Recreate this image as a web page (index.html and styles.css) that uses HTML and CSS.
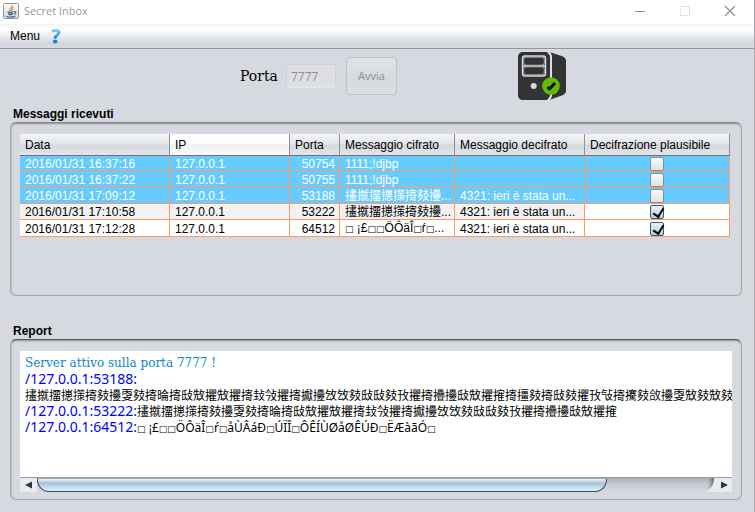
FILE: index.html
```
<!DOCTYPE html>
<html lang="it">
<head>
<meta charset="utf-8">
<title>Secret Inbox</title>
<link rel="stylesheet" href="styles.css">
</head>
<body>
<div class="window">
  <header class="titlebar">
    <svg class="app-icon" viewBox="0 0 16 16" width="16" height="16" aria-hidden="true">
      <defs><linearGradient id="tile" x1="0" y1="0" x2="0" y2="1"><stop offset="0" stop-color="#fdfdfd"/><stop offset="1" stop-color="#cfd9e2"/></linearGradient></defs>
      <rect x=".5" y=".5" width="15" height="15" rx="1" fill="url(#tile)" stroke="#8697a6"/>
      <path d="M9.300 2.200C9.800 4 6 5 7 6.800l1 1.200M10.500 4.500C8.500 5.500 8.300 6.300 9 7.800" fill="none" stroke="#e58a2e" stroke-width="1.200"/>
      <path d="M4.500 8.600c1.500.8 4.500.8 6 0M5 10.300c1.500.7 4 .7 5.300 0M5.500 11.800h4M3 13.200c2.500 1 7 1 9.500-.2M11 8.700c2.600-.6 2.300 2 .2 2.400" fill="none" stroke="#41698f" stroke-width="1.100"/>
    </svg>
    <span class="title">Secret Inbox</span>
    <div class="controls">
      <button type="button" aria-label="Riduci"><svg width="12" height="12" viewBox="0 0 12 12"><path d="M1 6.500h10" stroke="#8b8b8b"/></svg></button>
      <button type="button" aria-label="Ingrandisci"><svg width="12" height="12" viewBox="0 0 12 12"><rect x="1.500" y="1.500" width="9" height="9" fill="none" stroke="#e4e4e4"/></svg></button>
      <button type="button" aria-label="Chiudi"><svg width="12" height="12" viewBox="0 0 12 12"><path d="M1 1l10 10M11 1L1 11" stroke="#8b8b8b" stroke-width="1.100"/></svg></button>
    </div>
  </header>

  <nav class="menubar">
    <button type="button">Menu</button>
    <button type="button" aria-label="Aiuto">
      <svg width="12" height="16" viewBox="0 0 12 16"><defs><linearGradient id="help" x1="0" y1="0" x2="0" y2="1"><stop offset="0" stop-color="#8fd6fb"/><stop offset="1" stop-color="#0a7fe0"/></linearGradient></defs><path d="M1.500 2C4 .5 10.500.3 10.500 4.300c0 3.200-3.800 3-3.800 6.200H3.800C3.600 7 7 6.800 7 4.800 7 3.300 4.500 3.600 2.200 4.700z" fill="url(#help)"/><ellipse cx="5.200" cy="13.500" rx="2.300" ry="1.900" fill="#0a84e4"/></svg>
    </button>
  </nav>

  <main>
    <form class="connection">
      <label for="port">Porta</label>
      <input id="port" type="text" value="7777" disabled>
      <button type="button" disabled>Avvia</button>
      <svg class="server" width="48" height="48" viewBox="0 0 48 48" role="img" aria-label="Server attivo">
        <path d="M5 0h22c3 0 5 2 5 5v38c0 3-2 5-5 5H5c-3 0-5-2-5-5V5c0-3 2-5 5-5z" fill="#333"/>
        <path d="M32 .3l11 3.500c3 1 5 2.500 5 5v30c0 2.500-2 4-5 5L32 47.700c1.300-1.300 2-3 2-5V5.500c0-2-.7-4-2-5.200z" fill="#333"/>
        <path d="M30 .5c2 1 3 2.500 3 5v37c0 2.500-1 4-3 5" fill="none" stroke="#dfe2e8" stroke-width="1.200"/>
        <rect x="4.500" y="4" width="23" height="20" rx="2.500" fill="#333" stroke="#d6d9df" stroke-width="1.500"/>
        <path d="M5 14h22" stroke="#d6d9df" stroke-width="1.500"/>
        <rect x="5.700" y="5.200" width="20.600" height="8" rx="2.500" fill="#333" stroke="#d6d9df" stroke-width=".7"/>
        <rect x="5.700" y="14.800" width="20.600" height="8" rx="2.500" fill="#333" stroke="#d6d9df" stroke-width=".7"/>
        <circle cx="15.700" cy="34" r="3" fill="#d6d9df"/>
        <circle cx="33" cy="34" r="8.800" fill="#62bd00"/>
        <path d="M29.500 35l2 2 5.500-6" fill="none" stroke="#000" stroke-width="2.800"/>
      </svg>
    </form>

    <section class="group">
      <h2>Messaggi ricevuti</h2>
      <div class="panel messages">
        <table>
          <colgroup><col class="c-date"><col class="c-ip"><col class="c-port"><col class="c-enc"><col class="c-dec"><col></colgroup>
          <thead>
            <tr><th>Data</th><th class="sorted">IP</th><th>Porta</th><th>Messaggio cifrato</th><th>Messaggio decifrato</th><th>Decifrazione plausibile</th></tr>
          </thead>
          <tbody>
            <tr class="selected"><td>2016/01/31 16:37:16</td><td>127.0.0.1</td><td class="num">50754</td><td>1111;!djbp</td><td></td><td class="check"><input type="checkbox" aria-label="Plausibile"></td></tr>
            <tr class="selected"><td>2016/01/31 16:37:22</td><td>127.0.0.1</td><td class="num">50755</td><td>1111;!djbp</td><td></td><td class="check"><input type="checkbox" aria-label="Plausibile"></td></tr>
            <tr class="selected"><td>2016/01/31 17:09:12</td><td>127.0.0.1</td><td class="num">53188</td><td>&#x3A47;&#x3A46;&#x3A45;&#x3A44;&#x3A4D;&#x3A33;&#x3A7C;&#x3A78;...</td><td>4321: ieri è stata un...</td><td class="check"><input type="checkbox" aria-label="Plausibile"></td></tr>
            <tr class="striped"><td>2016/01/31 17:10:58</td><td>127.0.0.1</td><td class="num">53222</td><td>&#x3A47;&#x3A46;&#x3A45;&#x3A44;&#x3A4D;&#x3A33;&#x3A7C;&#x3A78;...</td><td>4321: ieri è stata un...</td><td class="check"><input type="checkbox" aria-label="Plausibile" checked></td></tr>
            <tr><td>2016/01/31 17:12:28</td><td>127.0.0.1</td><td class="num">64512</td><td><span class="box">□</span> ¡£<span class="box">□□</span>ÖÔäÎ<span class="box">□</span>ŕ<span class="box">□</span>...</td><td>4321: ieri è stata un...</td><td class="check"><input type="checkbox" aria-label="Plausibile" checked></td></tr>
          </tbody>
        </table>
      </div>
    </section>

    <section class="group">
      <h2>Report</h2>
      <div class="panel report">
        <div class="log">
          <p class="status">Server attivo sulla porta 7777 !</p>
          <p><span class="peer">/127.0.0.1:53188:</span></p>
          <p class="cjk">&#x3A47;&#x3A46;&#x3A45;&#x3A44;&#x3A4D;&#x3A33;&#x3A7C;&#x3A78;&#x3A85;&#x3A7C;&#x3A33;&#x3AFB;&#x3A33;&#x3A86;&#x3A87;&#x3A74;&#x3A87;&#x3A74;&#x3A33;&#x3A88;&#x3A81;&#x3A74;&#x3A33;&#x3A75;&#x3A78;&#x3A7F;&#x3A7F;&#x3A7C;&#x3A86;&#x3A86;&#x3A7C;&#x3A80;&#x3A74;&#x3A33;&#x3A79;&#x3A78;&#x3A86;&#x3A87;&#x3A74;&#x3A41;&#x3A33;&#x3A56;&#x3A7C;&#x3A33;&#x3A86;&#x3A7C;&#x3A74;&#x3A80;&#x3A82;&#x3A33;&#x3A77;&#x3A7C;&#x3A89;&#x3A78;&#x3A85;&#x3A87;&#x3A7C;&#x3A87;&#x3A7C;</p>
          <p><span class="peer">/127.0.0.1:53222:</span><span class="cjk">&#x3A47;&#x3A46;&#x3A45;&#x3A44;&#x3A4D;&#x3A33;&#x3A7C;&#x3A78;&#x3A85;&#x3A7C;&#x3A33;&#x3AFB;&#x3A33;&#x3A86;&#x3A87;&#x3A74;&#x3A87;&#x3A74;&#x3A33;&#x3A88;&#x3A81;&#x3A74;&#x3A33;&#x3A75;&#x3A78;&#x3A7F;&#x3A7F;&#x3A7C;&#x3A86;&#x3A86;&#x3A7C;&#x3A80;&#x3A74;&#x3A33;&#x3A79;&#x3A78;&#x3A86;&#x3A87;&#x3A74;&#x3A41;</span></p>
          <p><span class="peer">/127.0.0.1:64512:</span><span class="latin"><span class="box">□</span> ¡£<span class="box">□□</span>ÖÔäÎ<span class="box">□</span>ŕ<span class="box">□</span>åÙÂáÐ<span class="box">□</span>ÚÏÎ<span class="box">□</span>ÔÊÍÙØåØÊÚÐ<span class="box">□</span>ËÆàãÓ<span class="box">□</span></span></p>
        </div>
        <div class="scrollbar">
          <button type="button" aria-label="Scorri a sinistra"><svg width="8" height="8" viewBox="0 0 8 8"><path d="M0 4l7-3.500v7z" fill="#333"/></svg></button>
          <div class="track"><div class="thumb"></div><svg class="track-end" width="9" height="14" viewBox="0 0 9 14"><defs><linearGradient id="end" x1="0" y1="0" x2="1" y2="0"><stop offset="0" stop-color="#c2c5cb" stop-opacity="0"/><stop offset="1" stop-color="#55585e"/></linearGradient></defs><path d="M0 0h8c0 6-2 10-8 13z" fill="url(#end)"/><path d="M8 0c0 6-2 10-8 14h9V0z" fill="#e9ebee"/></svg></div>
          <button type="button" aria-label="Scorri a destra"><svg width="8" height="8" viewBox="0 0 8 8"><path d="M8 4L1 .5v7z" fill="#333"/></svg></button>
        </div>
      </div>
    </section>
  </main>
</div>
</body>
</html>
```
FILE: styles.css
```
* { box-sizing: border-box; }

body {
  margin: 0;
  background: #d6d9df;
  color: #000;
  font: 12px/16px "Liberation Sans", "Noto Sans CJK SC", sans-serif;
}

button { margin: 0; padding: 0; border: 0; background: none; font: inherit; color: inherit; }
svg { display: block; }

.window { min-height: 100vh; border-right: 1px solid #a5a7aa; }

.titlebar { display: flex; align-items: center; height: 24px; padding-left: 3px; background: #fff; }
.app-icon { margin-bottom: 2px; }
.title { margin: 0 0 2px 5px; color: #999; font: 11px/16px "Open Sans", sans-serif; }
.controls { display: flex; margin: 0 2px 2px auto; }
.controls button { display: grid; place-items: center; width: 45px; height: 22px; }

.menubar {
  display: flex;
  align-items: center;
  gap: 10px;
  height: 25px;
  padding-left: 10px;
  border-bottom: 1px solid #9297a1;
  background: linear-gradient(#f3f4f5, #fff 25%, #e9ecee 50%, #d3d7dc 80%, #d6d9df);
}

.connection {
  display: flex;
  align-items: center;
  justify-content: center;
  height: 58px;
  padding: 0 0 4px 52px;
}
.connection label { font: 14px/20px "DejaVu Serif", serif; }
.connection input {
  width: 50px;
  height: 24px;
  margin: 0 10px 0 8px;
  padding: 0 4px;
  border: 1px solid #cdd0d5;
  border-bottom-color: #e3e5e9;
  background: #dddfe3;
  color: #8e8f91;
  font: 12px/20px "Open Sans", sans-serif;
}
.connection button {
  width: 51px;
  height: 38px;
  border: 1px solid #bfc3c9;
  border-radius: 4px;
  background: linear-gradient(#dfe2e6, #d6d9de 60%, #dddfe4);
  color: #8e8f91;
  font: 11px/20px "Open Sans", sans-serif;
}
.server { margin-left: 121px; }

.group { padding: 0 12px 0 10px; }
.group h2 { margin: 0; padding-left: 3px; font-size: 12px; line-height: 15px; }
.panel {
  border: 1px solid #a4a7ac;
  border-top-color: #83868b;
  border-radius: 6px;
  box-shadow: inset 0 2px 2px -1px #8a8d92, inset 1px 0 1px #bfc2c8;
}

.messages { min-height: 174px; margin-bottom: 28px; padding: 11px 11px 0 9px; }
table { width: 100%; border-collapse: separate; border-spacing: 0; table-layout: fixed; }
.c-date { width: 150px; }
.c-ip { width: 120px; }
.c-port { width: 50px; }
.c-enc { width: 115px; }
.c-dec { width: 130px; }
th {
  height: 22px;
  padding: 0 5px;
  border-right: 1px solid #8e9196;
  border-bottom: 1px solid #6e7176;
  background: linear-gradient(#f4f5f7, #e4e6ea 45%, #d5d8dd 55%, #e3e5e9);
  font-weight: normal;
  text-align: left;
  white-space: nowrap;
}
th.sorted { background: linear-gradient(#fff, #fbfbfc 45%, #eff0f3 55%, #fafafb); }
td {
  height: 16px;
  padding: 2px 5px 0;
  border-right: 1px solid #ff9966;
  border-bottom: 1px solid #ff9966;
  background: #fff;
  line-height: 13px;
  white-space: nowrap;
  overflow: hidden;
}
.striped td { background: #f2f2f2; }
.striped .check { background: #fff; }
.selected td { background: #66ccff; color: #fff; }
.num { text-align: right; }
td.num { padding-right: 4px; }
td.check { padding-top: 1px; }
.check input {
  display: block;
  appearance: none;
  width: 14px;
  height: 14px;
  margin: 0 auto;
  border: 1px solid #898c95;
  border-radius: 2px;
  background: linear-gradient(#fbfbfb, #dfe2e8);
}
.check input:checked {
  border-color: #3e5a72;
  background: linear-gradient(#e8f2fa, #b2cbe0);
}
.check input:checked::before {
  content: "";
  display: block;
  width: 5px;
  height: 9px;
  margin: 0 0 0 4px;
  border: solid #000;
  border-width: 0 2px 2px 0;
  transform: rotate(32deg);
}

.report { padding: 11px 9px 7px; border-top-color: #54565a; }
.log { min-height: 126px; padding: 4px 5px; background: #fff; overflow: hidden; white-space: nowrap; }
.log p { height: 16px; margin: 0; line-height: 16px; }
.log .status { color: #0f83c9; font: 12px/16px "DejaVu Serif", serif; }
.peer { color: #00f; font: 14px/16px "Noto Sans", sans-serif; }
.cjk { font: 12px/16px "Noto Sans CJK SC", sans-serif; }
.latin { font: 12px/16px "Noto Sans", sans-serif; }
.box { font-family: "DejaVu Sans", sans-serif; font-size: 9px; }

.scrollbar { display: flex; height: 15px; background: #e9ebee; border-top: 1px solid #9a9da2; }
.scrollbar button { display: grid; place-items: center; width: 17px; height: 14px; }
.track {
  display: flex;
  flex: 1;
  justify-content: space-between;
  background: linear-gradient(#a9acb2, #c6c9cf 40%, #d6d9df);
}
.thumb {
  width: 84%;
  border: 1px solid #2f4d68;
  border-top-color: #9aabb9;
  border-radius: 2px 2px 14px 14px;
  background: linear-gradient(#eef5fa, #a9bfd2 35%, #bdd5e8 60%, #dff1fc);
}
```
